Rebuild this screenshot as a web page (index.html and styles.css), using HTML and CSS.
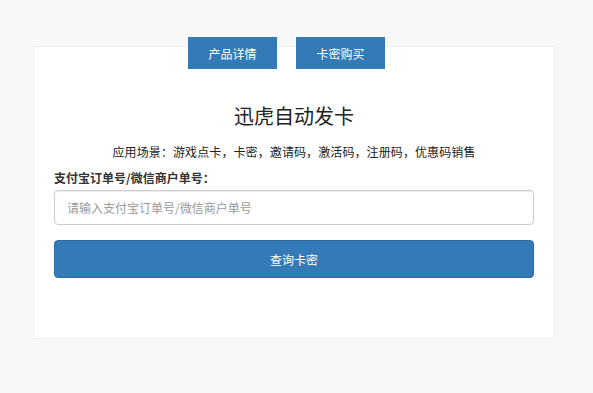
FILE: index.html
```html
<!DOCTYPE html>
<html lang="zh-CN">
<head>
<meta charset="utf-8">
<title>迅虎自动发卡</title>
<link rel="stylesheet" href="styles.css">
</head>
<body>
<div class="card">
  <div class="tabs">
    <a class="tab">产品详情</a>
    <a class="tab">卡密购买</a>
  </div>
  <h1 class="title">迅虎自动发卡</h1>
  <p class="subtitle">应用场景：游戏点卡，卡密，邀请码，激活码，注册码，优惠码销售</p>
  <label class="label">支付宝订单号/微信商户单号：</label>
  <input class="input" type="text" placeholder="请输入支付宝订单号/微信商户单号">
  <button class="btn">查询卡密</button>
</div>
</body>
</html>
```
FILE: styles.css
```css
html, body {
  margin: 0;
  padding: 0;
}
body {
  background: #f8f8f8;
  font-family: "Noto Sans CJK SC", "Liberation Sans", sans-serif;
  color: #333;
  padding-top: 46px;
}
.card {
  margin-left: 33px;
  background: #fff;
  border: 1px solid #eee;
  padding: 0 20px 60px 20px;
  width: 480px;
  display: flex;
  flex-direction: column;
}
.tabs {
  display: flex;
  gap: 19px;
  margin-top: -10px;
  padding-left: 134px;
}
.tab {
  width: 89px;
  height: 32px;
  background: #337ab7;
  color: #fff;
  font-size: 12px;
  display: flex;
  align-items: center;
  justify-content: center;
}
.title {
  margin: 33px 0 0;
  font-size: 20px;
  line-height: 28px;
  font-weight: normal;
  text-align: center;
  color: #222;
}
.subtitle {
  margin: 12px 0 0;
  font-size: 12px;
  line-height: 20px;
  text-align: center;
  color: #222;
  letter-spacing: 0.1px;
}
.label {
  margin-top: 6px;
  font-size: 12px;
  line-height: 20px;
  font-weight: bold;
  color: #333;
}
.input {
  margin-top: 2px;
  height: 35px;
  box-sizing: border-box;
  border: 1px solid #ccc;
  border-radius: 4px;
  padding: 0 12px;
  font-family: inherit;
  font-size: 12px;
  color: #555;
  box-shadow: inset 0 1px 1px rgba(0,0,0,.075);
}
.input::placeholder {
  color: #999;
}
.btn {
  margin-top: 15px;
  height: 38px;
  box-sizing: border-box;
  background: #337ab7;
  border: 1px solid #2e6da4;
  border-radius: 4px;
  color: #fff;
  font-family: inherit;
  font-size: 12px;
}
```
